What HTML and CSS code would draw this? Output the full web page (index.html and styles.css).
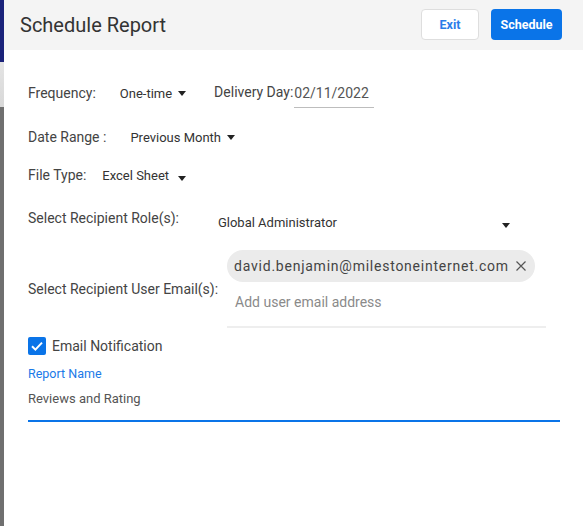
FILE: index.html
```html
<!DOCTYPE html>
<html lang="en">
<head>
    <meta charset="UTF-8">
    <meta name="viewport" content="width=device-width, initial-scale=1.0">
    <title>Schedule Report</title>
    <link rel="stylesheet" href="styles.css">
</head>
<body>
    <div class="page">
        <div class="side-strip">
            <div class="strip-nav"></div>
            <div class="strip-fade"></div>
            <div class="strip-grey"></div>
        </div>

        <div class="modal">
            <div class="modal-header">
                <h1>Schedule Report</h1>
                <div class="header-actions">
                    <button class="btn btn-outline">Exit</button>
                    <button class="btn btn-primary">Schedule</button>
                </div>
            </div>

            <div class="modal-body">
                <div class="row row-frequency">
                    <span class="label">Frequency:</span>
                    <span class="select gap-24">One-time <i class="caret"></i></span>
                    <span class="label delivery-label">Delivery Day:</span>
                    <span class="date-input">02/11/2022</span>
                </div>

                <div class="row row-range">
                    <span class="label">Date Range :</span>
                    <span class="select gap-24">Previous Month <i class="caret"></i></span>
                </div>

                <div class="row row-type">
                    <span class="label">File Type:</span>
                    <span class="select gap-16">Excel Sheet <i class="caret caret-low"></i></span>
                </div>

                <div class="row row-role">
                    <span class="label">Select Recipient Role(s):</span>
                    <span class="select role-select">Global Administrator <i class="caret"></i></span>
                </div>

                <div class="row row-email">
                    <span class="label">Select Recipient User Email(s):</span>
                    <div class="email-box">
                        <span class="chip">david.benjamin@milestoneinternet.com
                            <svg class="chip-close" width="12" height="12" viewBox="0 0 12 12">
                                <path d="M1.5 1.5 L10.5 10.5 M10.5 1.5 L1.5 10.5" stroke="#555" stroke-width="1.2" fill="none"/>
                            </svg>
                        </span>
                        <div class="email-placeholder">Add user email address</div>
                    </div>
                </div>

                <div class="row row-check">
                    <span class="checkbox">
                        <svg width="18" height="18" viewBox="0 0 18 18">
                            <path d="M4 9.2 L7.4 12.6 L14 5.6" stroke="#fff" stroke-width="2" fill="none"/>
                        </svg>
                    </span>
                    <span class="check-label">Email Notification</span>
                </div>

                <div class="field">
                    <div class="field-label">Report Name</div>
                    <div class="field-value">Reviews and Rating</div>
                </div>
            </div>
        </div>
    </div>
</body>
</html>
```

FILE: styles.css
```css
html, body {
    margin: 0;
    height: 100%;
}
body {
    font-family: Roboto, "Liberation Sans", sans-serif;
    color: #444;
    background-color: #fff;
}
.page {
    display: flex;
    height: 100%;
}
.side-strip {
    width: 4px;
    display: flex;
    flex-direction: column;
}
.strip-nav {
    height: 62px;
    background-color: #1b237a;
}
.strip-fade {
    height: 45px;
    background: linear-gradient(#e4e4e4, #d8d8d8);
}
.strip-grey {
    flex: 1;
    background-color: #6f6f6f;
}
.modal {
    flex: 1;
    background-color: white;
}
.modal-header {
    height: 50px;
    background-color: #f4f4f4;
    display: flex;
    align-items: center;
    justify-content: space-between;
    padding: 0 21px 0 16px;
}
h1 {
    margin: 0;
    font-size: 20px;
    font-weight: 400;
    color: #333;
    padding-bottom: 1px;
}
.header-actions {
    display: flex;
    gap: 12px;
    padding-bottom: 1px;
}
.btn {
    font-family: inherit;
    font-size: 12.5px;
    font-weight: 700;
    border-radius: 4px;
    cursor: pointer;
    height: 31px;
}
.btn-outline {
    width: 58px;
    background-color: white;
    color: #2b7de9;
    border: 1px solid #dedede;
}
.btn-primary {
    width: 71px;
    background-color: #0a74e8;
    color: white;
    border: none;
}
.modal-body {
    padding: 23px 24px 0 24px;
}
.row {
    display: flex;
    align-items: center;
}
.label {
    font-size: 14px;
    color: #444;
    white-space: nowrap;
}
.select {
    font-size: 13px;
    color: #333;
    display: inline-flex;
    align-items: center;
    white-space: nowrap;
}
.gap-24 {
    margin-left: 24px;
}
.gap-16 {
    margin-left: 16px;
}
.caret {
    display: inline-block;
    width: 0;
    height: 0;
    border-left: 4.5px solid transparent;
    border-right: 4.5px solid transparent;
    border-top: 5px solid #222;
    margin-left: 6px;
}
.caret-low {
    margin-top: 6px;
    margin-left: 9px;
}
.row-frequency {
    height: 40px;
}
.delivery-label {
    margin-left: 28px;
    margin-top: -2px;
}
.date-input {
    font-size: 14px;
    color: #555;
    width: 80px;
    height: 28px;
    line-height: 26px;
    border-bottom: 1px solid #bdbdbd;
    margin-top: 1px;
    margin-left: 1px;
    box-sizing: border-box;
}
.row-range {
    height: 30px;
    margin-top: 9px;
}
.row-type {
    height: 30px;
    margin-top: 8px;
}
.row-role {
    height: 36px;
    margin-top: 10px;
}
.role-select {
    margin-left: 39px;
    width: 292px;
    justify-content: space-between;
    margin-top: 8px;
}
.role-select .caret {
    margin-top: 6px;
}
.row-email {
    margin-top: 14px;
}
.email-box {
    margin-left: 9px;
    width: 319px;
    border-bottom: 2px solid #eeeeee;
    padding-bottom: 16px;
}
.chip {
    display: inline-flex;
    align-items: center;
    height: 32px;
    padding: 0 8px 0 7px;
    border-radius: 16px;
    background-color: #ebebeb;
    font-size: 14px;
    letter-spacing: 0.76px;
    color: #444;
    white-space: nowrap;
}
.chip-close {
    margin-left: 6px;
}
.email-placeholder {
    font-size: 14px;
    color: #8a8a8a;
    margin: 12px 0 0 8px;
    line-height: 16px;
}
.row-check {
    height: 24px;
    margin-top: 6px;
}
.checkbox {
    width: 18px;
    height: 18px;
    background-color: #0a74e8;
    border-radius: 2px;
    display: inline-flex;
}
.check-label {
    font-size: 14px;
    color: #444;
    margin-left: 6px;
}
.field {
    border-bottom: 2px solid #0a74e8;
    margin-right: -1px;
}
.field-label {
    font-size: 12.5px;
    color: #1a7ae8;
    margin-top: 8px;
    line-height: 16px;
}
.field-value {
    font-size: 13px;
    color: #555;
    margin-top: 9px;
    line-height: 16px;
    padding-bottom: 13px;
}
```
